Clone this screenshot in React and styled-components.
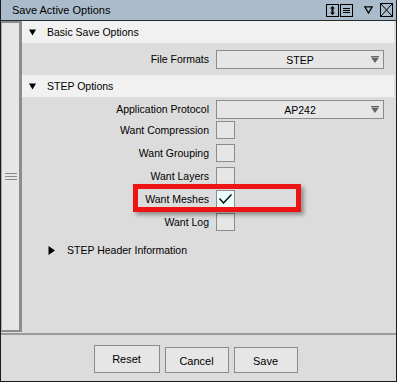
import React from "react";
import styled, { createGlobalStyle } from "styled-components";

const GlobalStyle = createGlobalStyle`
  html, body {
    margin: 0;
    padding: 0;
    background: #dcdcdc;
  }
  body {
    font-family: "Liberation Sans", Arial, sans-serif;
    font-size: 10.5px;
    color: #000;
  }
`;

const Window = styled.div`
  position: relative;
  width: 397px;
  height: 382px;
  box-sizing: border-box;
  border: 1px solid #1c1c1c;
  border-top: none;
  display: flex;
  flex-direction: column;
  background: #dcdcdc;
`;

const TitleBar = styled.div`
  flex-shrink: 0;
  height: 20px;
  border-bottom: 1px solid #2a2a2a;
  background: #aabccb;
  display: flex;
  align-items: center;
  padding: 0 3px 0 11px;
  font-size: 11px;
`;

const Title = styled.span`
  flex: 1;
`;

const TitleIcon = styled.svg`
  display: block;
  margin-left: ${(p) => p.$ml || 0}px;
`;

const Body = styled.div`
  flex: 1;
  display: flex;
  min-height: 0;
`;

const Sidebar = styled.div`
  width: 21px;
  box-sizing: border-box;
  background: #e6e6e6;
  border: 2px solid #8c8c8c;
  border-left: 1px solid #a8a8a8;
  border-right-width: 3px;
  display: flex;
  align-items: center;
  justify-content: center;
`;

const Content = styled.div`
  flex: 1;
  padding-right: 2px;
  display: flex;
  flex-direction: column;
  & > * {
    flex-shrink: 0;
  }
`;

const SectionHeader = styled.div`
  height: 22px;
  background: #f1f1f1;
  display: flex;
  align-items: center;
  padding-left: 7px;
  gap: 11px;
`;

const SubHeader = styled.div`
  height: 22px;
  margin-top: 3px;
  display: flex;
  align-items: center;
  padding-left: 26px;
  gap: 12px;
`;

const SectionBody = styled.div`
  display: flex;
  flex-direction: column;
  padding: ${(p) => p.$pad};
`;

const Field = styled.div`
  display: flex;
  align-items: flex-start;
  height: ${(p) => p.$h}px;
`;

const Label = styled.div`
  width: 187px;
  margin-right: 7px;
  text-align: right;
  line-height: ${(p) => p.$lh}px;
  white-space: nowrap;
`;

const Select = styled.div`
  width: 168px;
  height: 19px;
  box-sizing: border-box;
  border: 1px solid #8c8c8c;
  background: #e6e6e6;
  display: grid;
  grid-template-columns: 16px 1fr 16px;
  align-items: center;
  justify-items: center;
`;

const Check = styled.div`
  width: 19px;
  height: 18px;
  box-sizing: border-box;
  border: 1px solid #8c8c8c;
  background: ${(p) => (p.$on ? "#eafdfd" : "#e6e6e6")};
  display: flex;
  align-items: center;
  justify-content: center;
`;

const Highlight = styled.div`
  position: absolute;
  left: 132px;
  top: 184px;
  width: 168px;
  height: 28px;
  box-sizing: border-box;
  border: 5px solid #ee1414;
  box-shadow: 3px 3px 4px rgba(0, 0, 0, 0.35);
  pointer-events: none;
`;

const Separator = styled.div`
  flex-shrink: 0;
  height: 2px;
  margin-top: 1px;
  background: #9a9a9a;
`;

const Footer = styled.div`
  flex-shrink: 0;
  height: 46px;
  box-sizing: border-box;
  display: flex;
  justify-content: center;
  align-items: flex-end;
  gap: 5px;
  padding: 0 6px 8px 0;
`;

const Button = styled.button`
  width: ${(p) => (p.$main ? 66 : 64)}px;
  height: ${(p) => (p.$main ? 28 : 26)}px;
  box-sizing: border-box;
  border: 1px solid #8a8a8a;
  background: #e6e6e6;
  font-family: "Liberation Sans", Arial, sans-serif;
  font-size: 11px;
  color: #000;
  padding: 0;
  padding-top: ${(p) => (p.$main ? 0 : 2)}px;
`;

const DownTri = () => (
  <svg width="7" height="7" viewBox="0 0 7 7">
    <path d="M0 0.5 H7 L3.5 6.5 Z" fill="#000" />
  </svg>
);

const RightTri = () => (
  <svg width="7" height="9" viewBox="0 0 7 9">
    <path d="M0.5 0 V9 L7 4.5 Z" fill="#000" />
  </svg>
);

const SelArrow = () => (
  <svg width="8" height="7" viewBox="0 0 8 7" style={{ gridColumn: 3 }}>
    <rect x="0" y="0" width="8" height="1" fill="#666" />
    <path d="M0 1.5 H8 L4 7 Z" fill="#666" />
  </svg>
);

const CheckMark = () => (
  <svg width="15" height="12" viewBox="0 0 15 12">
    <path d="M1.5 5.5 L5.5 10 L13.5 1.5" fill="none" stroke="#000" strokeWidth="1.3" />
  </svg>
);

const SelectField = ({ label, value }) => (
  <Field $h={21}>
    <Label $lh={19}>{label}</Label>
    <Select>
      <span style={{ gridColumn: 2 }}>{value}</span>
      <SelArrow />
    </Select>
  </Field>
);

const CheckField = ({ label, on }) => (
  <Field $h={23}>
    <Label $lh={18}>{label}</Label>
    <Check $on={on}>{on && <CheckMark />}</Check>
  </Field>
);

export default function App() {
  return (
    <>
      <GlobalStyle />
      <Window>
        <TitleBar>
          <Title>Save Active Options</Title>
          <TitleIcon width="13" height="13" viewBox="0 0 13 13">
            <rect x="0.5" y="0.5" width="12" height="12" fill="none" stroke="#000" />
            <path d="M6.5 3 V10" stroke="#000" strokeWidth="2" />
            <path d="M4 4.5 L6.5 2 L9 4.5 Z M4 8.5 L6.5 11 L9 8.5 Z" fill="#000" />
          </TitleIcon>
          <TitleIcon $ml={1} width="13" height="13" viewBox="0 0 13 13">
            <rect x="0.5" y="0.5" width="12" height="12" fill="none" stroke="#000" />
            <path d="M3 4.5 H10 M3 6.5 H10 M3 8.5 H10" stroke="#000" />
          </TitleIcon>
          <TitleIcon $ml={11} width="9" height="8" viewBox="0 0 9 8">
            <path d="M0.8 0.8 H8.2 L4.5 7 Z" fill="none" stroke="#000" strokeWidth="1.3" />
          </TitleIcon>
          <TitleIcon $ml={7} width="13" height="14" viewBox="0 0 13 14">
            <rect x="0.5" y="0.5" width="12" height="13" fill="none" stroke="#000" />
            <path d="M1 1 L12 13 M12 1 L1 13" stroke="#000" />
          </TitleIcon>
        </TitleBar>

        <Body>
          <Sidebar>
            <svg width="12" height="8" viewBox="0 0 12 8">
              <path d="M0 0.5 H12 M0 3.5 H12 M0 6.5 H12" stroke="#8a8a8a" />
            </svg>
          </Sidebar>
          <Content>
            <SectionHeader>
              <DownTri />
              <span>Basic Save Options</span>
            </SectionHeader>
            <SectionBody $pad="7px 0 4px">
              <SelectField label="File Formats" value="STEP" />
            </SectionBody>

            <SectionHeader>
              <DownTri />
              <span>STEP Options</span>
            </SectionHeader>
            <SectionBody $pad="3px 0 0">
              <SelectField label="Application Protocol" value="AP242" />
              <CheckField label="Want Compression" />
              <CheckField label="Want Grouping" />
              <CheckField label="Want Layers" />
              <CheckField label="Want Meshes" on />
              <CheckField label="Want Log" />
            </SectionBody>

            <SubHeader>
              <RightTri />
              <span>STEP Header Information</span>
            </SubHeader>
          </Content>
        </Body>

        <Separator />

        <Footer>
          <Button $main>Reset</Button>
          <Button>Cancel</Button>
          <Button>Save</Button>
        </Footer>

        <Highlight />
      </Window>
    </>
  );
}
